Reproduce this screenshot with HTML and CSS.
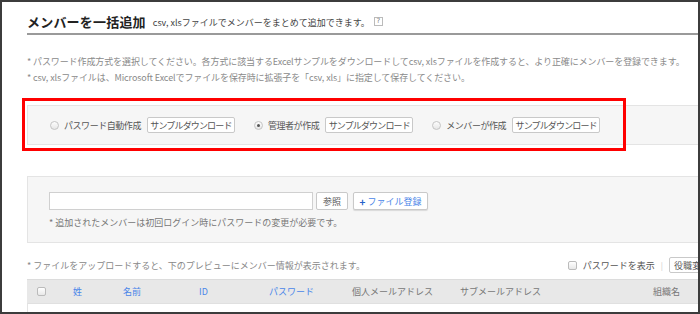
FILE: index.html
```html
<!DOCTYPE html>
<html lang="ja">
<head>
<meta charset="utf-8">
<link rel="stylesheet" href="styles.css">
</head>
<body>
<div class="frame">
  <div class="content">
    <div class="header">
      <h1 class="title">メンバーを一括追加</h1>
      <span class="subtitle">csv, xlsファイルでメンバーをまとめて追加できます。</span>
      <span class="help">?</span>
    </div>
    <div class="notes">
      <p>* パスワード作成方式を選択してください。各方式に該当するExcelサンプルをダウンロードしてcsv, xlsファイルを作成すると、より正確にメンバーを登録できます。</p>
      <p>* csv, xlsファイルは、Microsoft Excelでファイルを保存時に拡張子を「csv, xls」に指定して保存してください。</p>
    </div>
    <div class="panel method">
      <label class="opt"><span class="radio"></span><span class="opt-label">パスワード自動作成</span><span class="btn btn-sample">サンプルダウンロード</span></label>
      <label class="opt"><span class="radio checked"></span><span class="opt-label">管理者が作成</span><span class="btn btn-sample">サンプルダウンロード</span></label>
      <label class="opt"><span class="radio"></span><span class="opt-label">メンバーが作成</span><span class="btn btn-sample">サンプルダウンロード</span></label>
    </div>
    <div class="panel upload">
      <div class="upload-row">
        <span class="file-input"></span>
        <span class="btn btn-ref">参照</span>
        <span class="btn btn-add"><span class="plus">+</span>ファイル登録</span>
      </div>
      <p class="upload-note">* 追加されたメンバーは初回ログイン時にパスワードの変更が必要です。</p>
    </div>
    <div class="toolbar">
      <p class="preview-note">* ファイルをアップロードすると、下のプレビューにメンバー情報が表示されます。</p>
      <div class="tools">
        <span class="check"></span>
        <span class="show-pw">パスワードを表示</span>
        <span class="sep">|</span>
        <span class="btn btn-role">役職変更</span>
      </div>
    </div>
    <div class="table-head">
      <span class="cell"><span class="check"></span></span>
      <span class="cell link">姓</span>
      <span class="cell link">名前</span>
      <span class="cell link">ID</span>
      <span class="cell link">パスワード</span>
      <span class="cell">個人メールアドレス</span>
      <span class="cell">サブメールアドレス</span>
      <span class="cell">組織名</span>
    </div>
    <div class="table-body"></div>
  </div>
  <div class="highlight"></div>
</div>
</body>
</html>
```

FILE: styles.css
```css
* { box-sizing: border-box; }
html, body { margin: 0; padding: 0; background: #fff; }
body {
  font-family: "Noto Sans CJK JP", "Noto Sans", sans-serif;
  color: #555;
}
.frame {
  position: relative;
  width: 700px;
  height: 314px;
  border: 2px solid #3c3c3c;
  overflow: hidden;
  background: #fff;
}
.content {
  padding-left: 25px;
  width: 740px;
}
.header {
  display: flex;
  align-items: center;
  height: 33px;
  border-bottom: 2px solid #9a9a9a;
  padding-top: 8px;
}
.title {
  margin: 0;
  font-size: 13px;
  font-weight: bold;
  color: #222;
  letter-spacing: 0.2px;
}
.subtitle {
  margin-left: 7px;
  font-size: 9px;
  color: #444;
  padding-top: 1px;
}
.help {
  margin-left: 4px;
  width: 9px;
  height: 9px;
  border: 1px solid #bbb;
  font-size: 7px;
  line-height: 7px;
  text-align: center;
  color: #777;
  font-family: "DejaVu Sans", sans-serif;
}
.notes {
  margin-top: 19px;
  font-size: 9px;
  color: #8a8a8a;
  letter-spacing: -0.1px;
}
.notes p { margin: 0; line-height: 16px; white-space: nowrap; }
.panel {
  background: #f6f6f6;
  border: 1px solid #e4e4e4;
  border-right: none;
}
.method {
  margin-top: 19px;
  height: 40px;
  display: flex;
  align-items: center;
  padding-left: 22px;
  gap: 19px;
}
.opt { display: flex; align-items: center; }
.radio {
  width: 9px;
  height: 9px;
  border-radius: 50%;
  border: 1px solid #c4c4c4;
  background: linear-gradient(#fdfdfd, #e6e6e6);
  position: relative;
}
.radio.checked::after {
  content: "";
  position: absolute;
  left: 2px; top: 2px;
  width: 3px; height: 3px;
  border-radius: 50%;
  background: #555;
}
.opt-label {
  margin-left: 5px;
  margin-right: 6px;
  font-size: 9px;
  color: #555;
  letter-spacing: -0.45px;
}
.btn {
  display: inline-flex;
  align-items: center;
  justify-content: center;
  height: 16px;
  padding: 0 4px;
  border: 1px solid #c9c9c9;
  border-radius: 2px;
  background: #fff;
  font-size: 9px;
  color: #555;
  white-space: nowrap;
}
.btn-sample {
  width: 88px;
  padding: 0;
  letter-spacing: -0.85px;
}
.upload {
  margin-top: 31px;
  height: 67px;
  padding: 15px 0 0 21px;
}
.upload-row { display: flex; align-items: center; }
.file-input {
  width: 264px;
  height: 18px;
  border: 1px solid #d0d0d0;
  background: #fff;
}
.btn-ref { margin-left: 3px; width: 32px; height: 18px; }
.btn-add { margin-left: 5px; width: 75px; height: 18px; color: #4a86e8; box-shadow: 0 1px 1px rgba(0,0,0,0.12); }
.plus { color: #2563c9; font-weight: bold; margin-right: 2px; font-size: 10px; }
.upload-note {
  margin: 6px 0 0;
  font-size: 9px;
  color: #777;
  line-height: 14px;
}
.toolbar {
  margin-top: 13px;
  display: flex;
  align-items: center;
  justify-content: space-between;
  height: 18px;
  width: 692px;
}
.preview-note { margin: 0; font-size: 9px; color: #888; }
.tools { display: flex; align-items: center; margin-left: auto; }
.check {
  display: inline-block;
  width: 9px;
  height: 9px;
  border: 1px solid #bbb;
  border-radius: 2px;
  background: linear-gradient(#fff, #e8e8e8);
}
.show-pw { margin-left: 6px; font-size: 9px; color: #555; }
.sep { margin-left: 6px; color: #ccc; font-size: 8px; }
.btn-role { margin-left: 6px; height: 16px; width: 50px; justify-content: flex-start; }
.table-head {
  margin-top: 5px;
  height: 24px;
  background: #e8e8e8;
  border-top: 1px solid #dcdcdc;
  display: grid;
  grid-template-columns: 36px 50px 76px 70px 83px 108px 193px auto;
  padding-left: 10px;
  align-items: center;
  font-size: 9px;
  color: #777;
}
.table-head .check { vertical-align: middle; }
.cell { white-space: nowrap; display: flex; align-items: center; }
.cell.link { color: #4a86e8; }
.table-body {
  height: 10px;
  border-left: 1px solid #e4e4e4;
  border-top: 1px solid #e0e0e0;
}
.highlight {
  position: absolute;
  left: 20px;
  top: 96px;
  width: 604px;
  height: 53px;
  border: 3px solid #f00;
}
```
